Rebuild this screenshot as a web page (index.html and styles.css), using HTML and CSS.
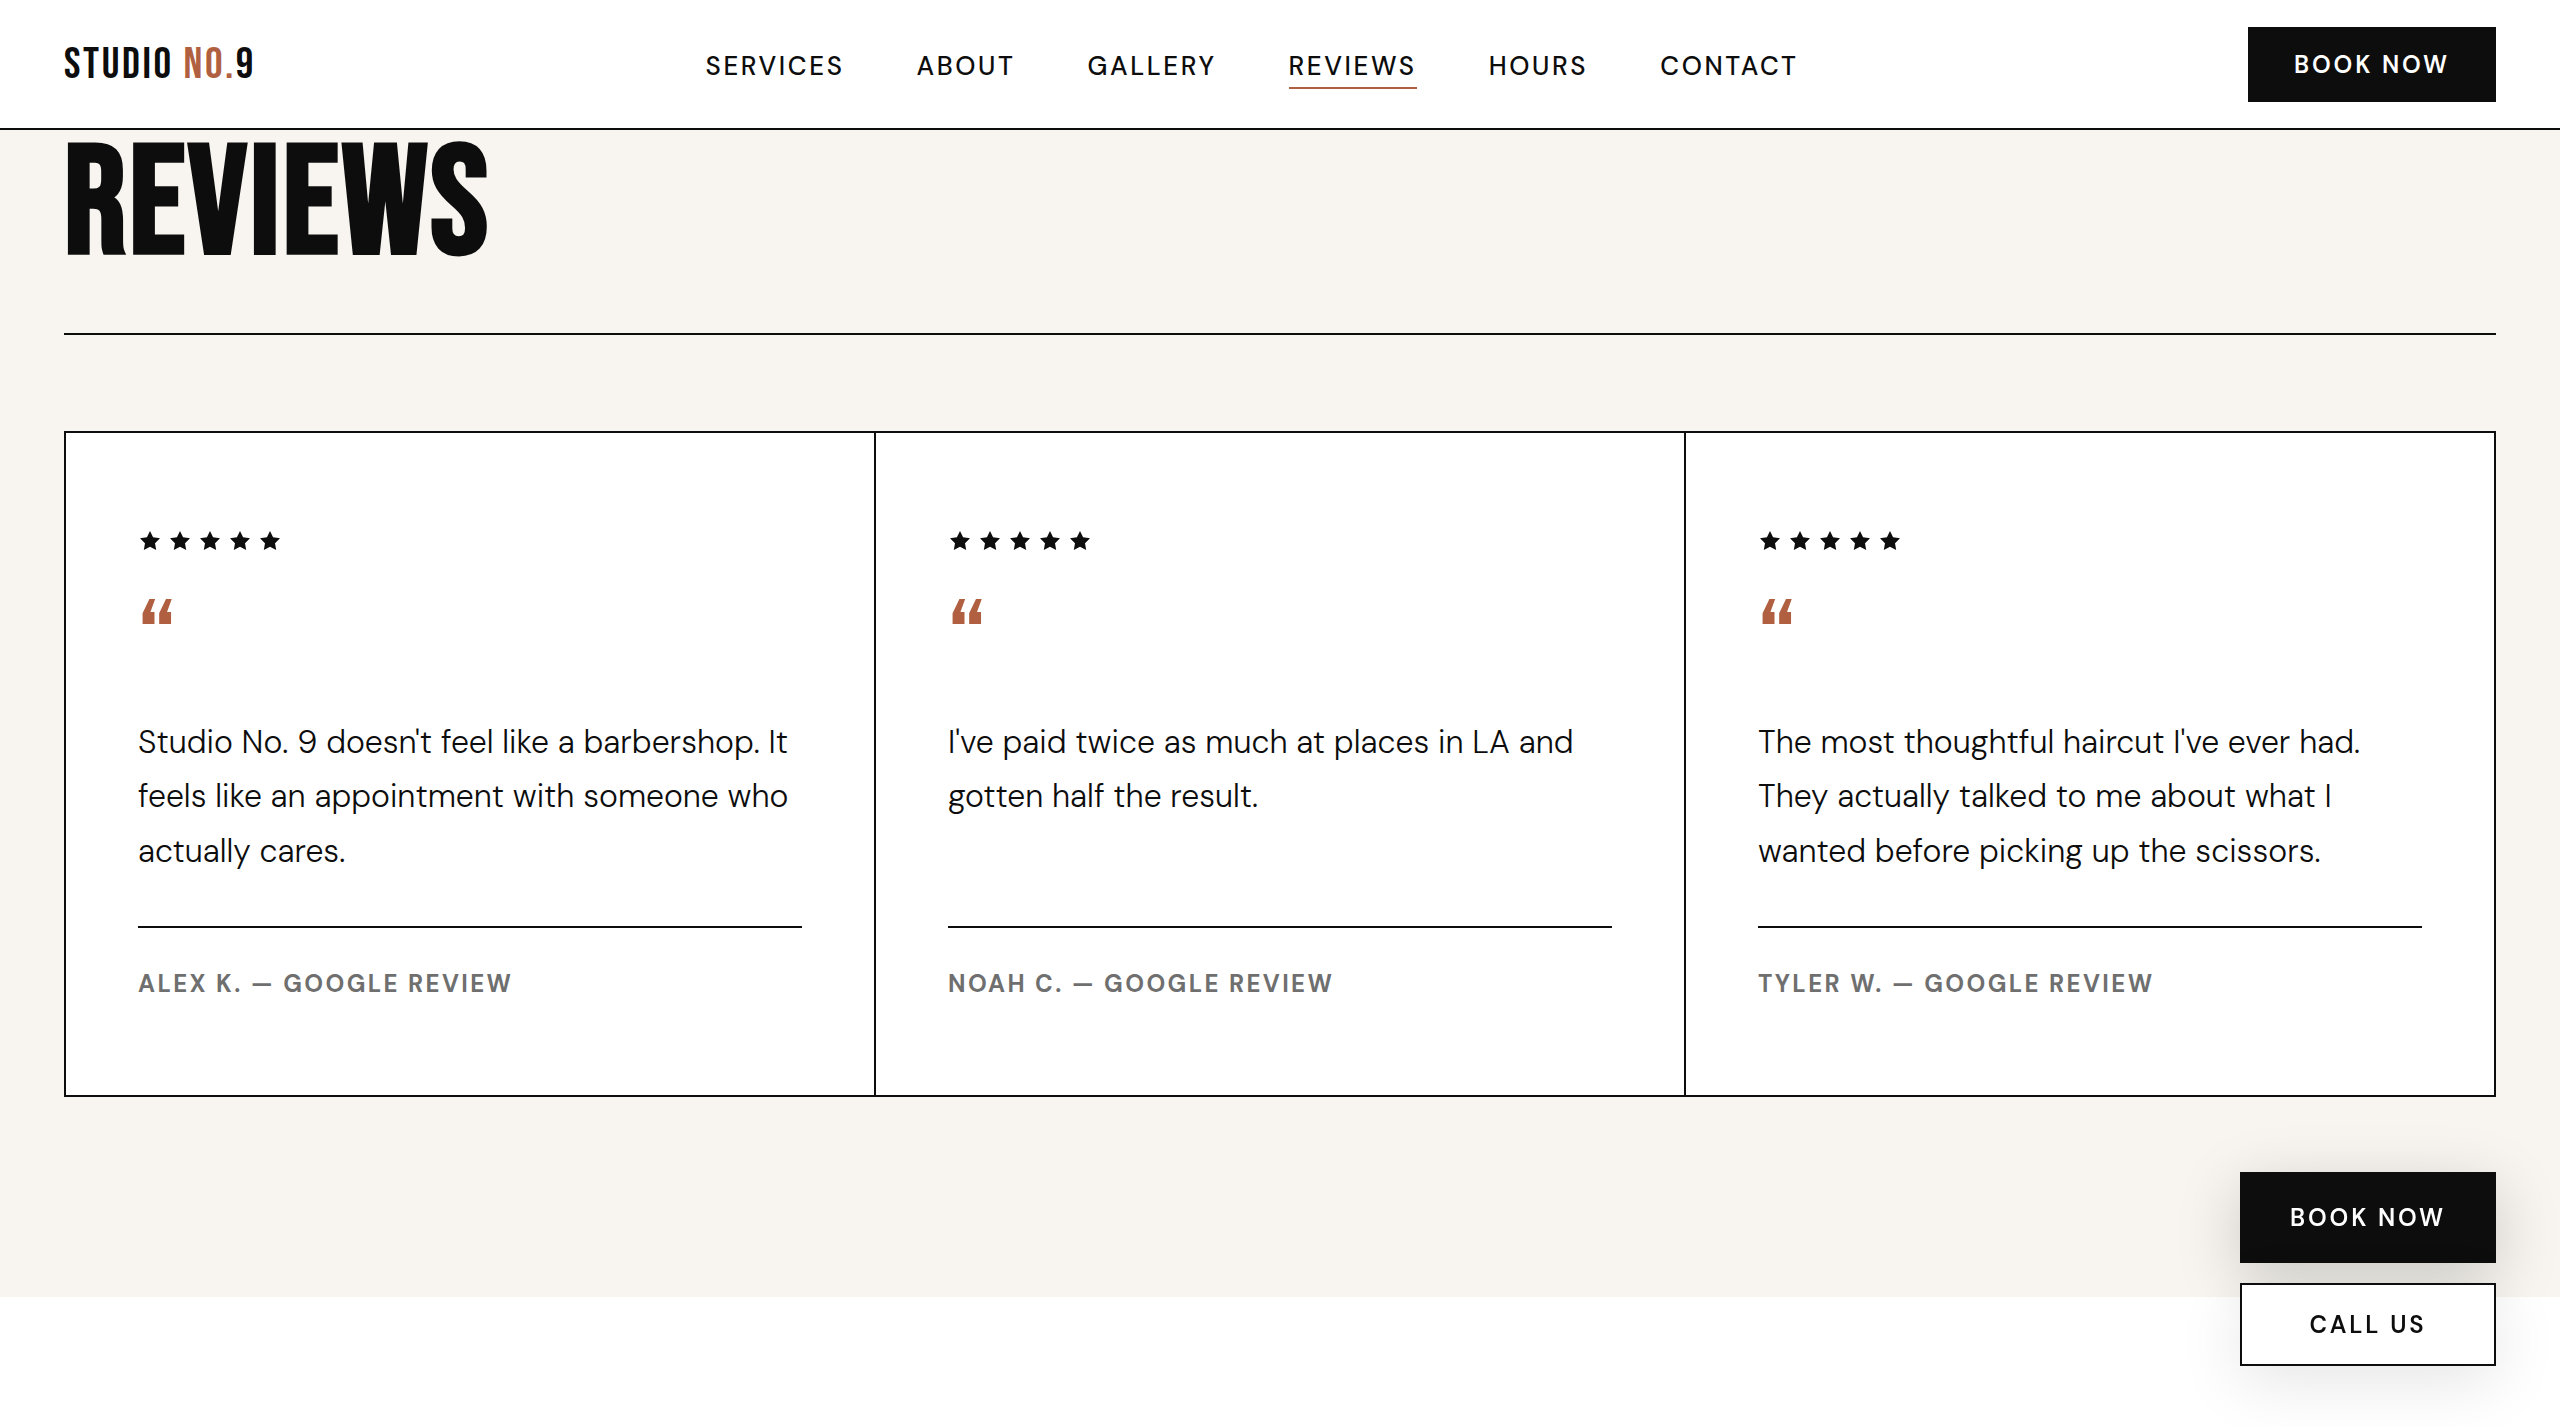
FILE: index.html
```
<!DOCTYPE html>
<html lang="en">
<head>
  <meta charset="utf-8">
  <meta name="viewport" content="width=device-width, initial-scale=1">
  <title>Studio No.9 - Reviews</title>
  <link rel="stylesheet" href="styles.css">
</head>
<body>
  <svg class="sprite" aria-hidden="true">
    <symbol id="star" viewBox="0 0 24 24">
      <polygon points="12 2 15.09 8.26 22 9.27 17 14.14 18.18 21.02 12 17.77 5.82 21.02 7 14.14 2 9.27 8.91 8.26"/>
    </symbol>
  </svg>

  <header class="header">
    <a class="logo" href="#">STUDIO <span class="logo-accent">NO.</span>9</a>
    <nav class="nav">
      <a class="nav-link" href="#services">Services</a>
      <a class="nav-link" href="#about">About</a>
      <a class="nav-link" href="#gallery">Gallery</a>
      <a class="nav-link active" href="#reviews">Reviews</a>
      <a class="nav-link" href="#hours">Hours</a>
      <a class="nav-link" href="#contact">Contact</a>
    </nav>
    <button class="button button-header" type="button">Book Now</button>
  </header>

  <main>
    <section class="reviews" id="reviews">
      <h2 class="section-title">REVIEWS</h2>

      <div class="review-grid">
        <article class="review">
          <div class="stars" role="img" aria-label="5 out of 5 stars">
            <svg class="star"><use href="#star"/></svg>
            <svg class="star"><use href="#star"/></svg>
            <svg class="star"><use href="#star"/></svg>
            <svg class="star"><use href="#star"/></svg>
            <svg class="star"><use href="#star"/></svg>
          </div>
          <div class="quote-mark">“</div>
          <p class="review-text">Studio No. 9 doesn't feel like a barbershop. It feels like an appointment with someone who actually cares.</p>
          <p class="review-author">Alex K. — Google Review</p>
        </article>

        <article class="review">
          <div class="stars" role="img" aria-label="5 out of 5 stars">
            <svg class="star"><use href="#star"/></svg>
            <svg class="star"><use href="#star"/></svg>
            <svg class="star"><use href="#star"/></svg>
            <svg class="star"><use href="#star"/></svg>
            <svg class="star"><use href="#star"/></svg>
          </div>
          <div class="quote-mark">“</div>
          <p class="review-text">I've paid twice as much at places in LA and gotten half the result.</p>
          <p class="review-author">Noah C. — Google Review</p>
        </article>

        <article class="review">
          <div class="stars" role="img" aria-label="5 out of 5 stars">
            <svg class="star"><use href="#star"/></svg>
            <svg class="star"><use href="#star"/></svg>
            <svg class="star"><use href="#star"/></svg>
            <svg class="star"><use href="#star"/></svg>
            <svg class="star"><use href="#star"/></svg>
          </div>
          <div class="quote-mark">“</div>
          <p class="review-text">The most thoughtful haircut I've ever had. They actually talked to me about what I wanted before picking up the scissors.</p>
          <p class="review-author">Tyler W. — Google Review</p>
        </article>
      </div>
    </section>
  </main>

  <div class="floating-actions">
    <button class="button button-book" type="button">Book Now</button>
    <button class="button button-call" type="button">Call Us</button>
  </div>
</body>
</html>
```
FILE: styles.css
```
:root {
  --ink: #0d0d0d;
  --paper: #f8f5f0;
  --rust: #b06040;
  --muted: #6f6f6f;
  --display: "Bebas Neue", "Open Sans Condensed", "Roboto Condensed", sans-serif;
  --body: "DM Sans", Inter, sans-serif;
}

* {
  margin: 0;
  padding: 0;
  box-sizing: border-box;
}

body {
  background-color: #ffffff;
  color: var(--ink);
  font-family: var(--body);
}

a {
  color: inherit;
  text-decoration: none;
}

.sprite {
  display: none;
}

/* Header */
.header {
  position: sticky;
  top: 0;
  z-index: 10;
  display: flex;
  align-items: center;
  justify-content: space-between;
  height: 130px;
  padding: 0 64px;
  background-color: #ffffff;
  border-bottom: 2px solid var(--ink);
}

.logo {
  font-family: var(--display);
  font-size: 44px;
  letter-spacing: 0.06em;
}

.logo-accent {
  color: var(--rust);
}

.nav {
  display: flex;
  gap: 72px;
}

.nav-link {
  padding: 10px 0 4px;
  font-size: 26px;
  font-weight: 500;
  line-height: 34px;
  letter-spacing: 0.1em;
  text-transform: uppercase;
  border-bottom: 2px solid transparent;
}

.nav-link.active {
  border-bottom-color: var(--rust);
}

/* Buttons */
.button {
  font-family: var(--body);
  font-size: 24px;
  font-weight: 600;
  line-height: 31px;
  letter-spacing: 0.12em;
  text-transform: uppercase;
  color: #ffffff;
  background-color: var(--ink);
  border: 2px solid var(--ink);
  cursor: pointer;
}

.button-header {
  padding: 20px 44px;
}

/* Reviews */
.reviews {
  padding: 0 64px 200px;
  background-color: var(--paper);
}

.section-title {
  padding-bottom: 51px;
  margin-bottom: 96px;
  font-family: var(--display);
  font-size: 154px;
  font-weight: 700;
  line-height: 152px;
  letter-spacing: 0.02em;
  border-bottom: 2px solid var(--ink);
}

.review-grid {
  display: grid;
  grid-template-columns: repeat(3, 1fr);
  gap: 2px;
  background-color: var(--ink);
  border: 2px solid var(--ink);
}

.review {
  display: flex;
  flex-direction: column;
  padding: 96px 72px;
  background-color: #ffffff;
}

.stars {
  display: flex;
  gap: 6px;
  margin-bottom: 36px;
}

.star {
  width: 24px;
  height: 24px;
  fill: var(--ink);
}

.quote-mark {
  margin-bottom: 14px;
  font-family: var(--display);
  font-size: 112px;
  line-height: 1;
  color: var(--rust);
}

.review-text {
  flex: 1;
  margin-bottom: 48px;
  font-size: 32px;
  font-weight: 300;
  line-height: 1.7;
}

.review-author {
  padding-top: 40px;
  font-size: 24px;
  font-weight: 700;
  line-height: 31px;
  letter-spacing: 0.1em;
  text-transform: uppercase;
  color: var(--muted);
  border-top: 2px solid var(--ink);
}

/* Floating actions */
.floating-actions {
  position: fixed;
  right: 64px;
  bottom: 60px;
  z-index: 20;
  display: flex;
  flex-direction: column;
  gap: 20px;
}

.button-book {
  padding: 28px 48px;
  box-shadow: 0 16px 64px rgba(0, 0, 0, 0.18);
}

.button-call {
  padding: 24px 48px;
  color: var(--ink);
  background-color: #ffffff;
  box-shadow: 0 16px 64px rgba(0, 0, 0, 0.1);
}
```
